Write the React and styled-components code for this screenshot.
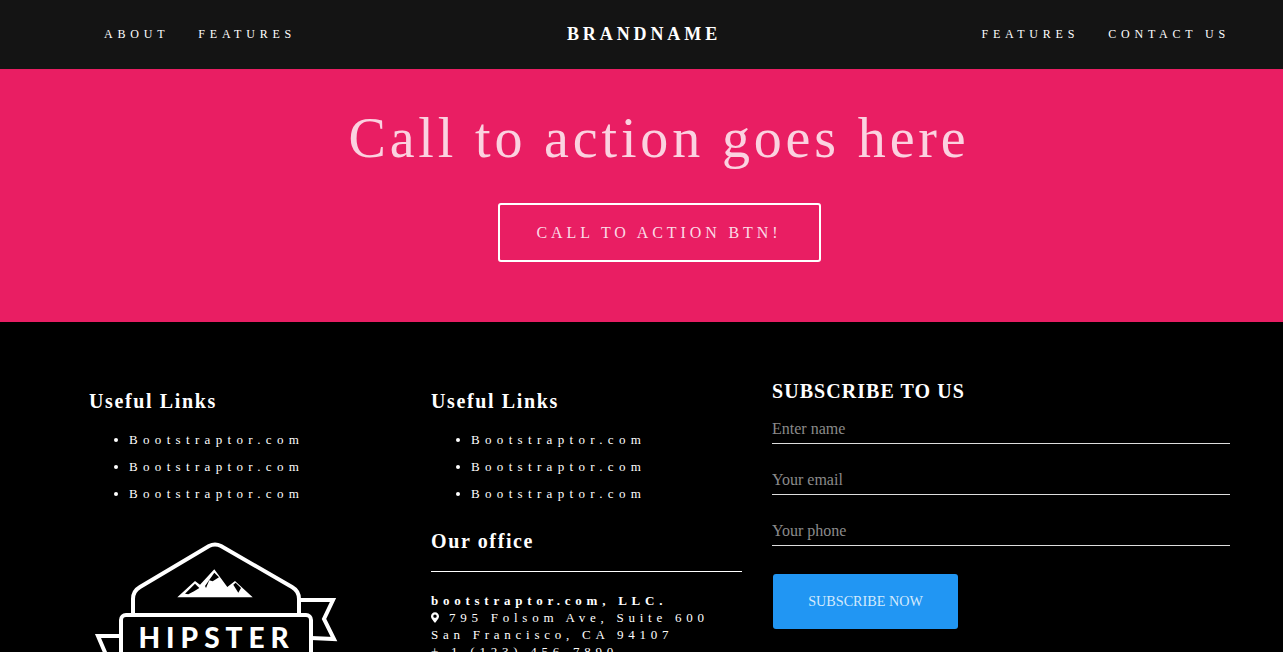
import styled, { createGlobalStyle } from "styled-components";
import { FaMapMarkerAlt } from "react-icons/fa";

const serif = `"Liberation Serif", "DejaVu Serif", serif`;

const GlobalStyle = createGlobalStyle`
  html, body {
    margin: 0;
    padding: 0;
    background: #000;
    font-family: ${serif};
    overflow-x: hidden;
  }
  html::-webkit-scrollbar { display: none; }
  * { box-sizing: border-box; }
`;

const Nav = styled.nav`
  height: 69px;
  background: #141414;
  padding: 0 53px 0 58px;
  display: grid;
  grid-template-columns: 1fr auto 1fr;
  align-items: center;
`;

const NavGroup = styled.div`
  display: flex;
  gap: 29px;
  padding-left: ${({ $end }) => ($end ? 0 : 46)}px;
  justify-content: ${({ $end }) => ($end ? "flex-end" : "flex-start")};
`;

const NavLink = styled.a`
  font-size: 12px;
  letter-spacing: 4.8px;
  color: #fff;
  text-transform: uppercase;
`;

const Brand = styled.a`
  font-size: 18px;
  font-weight: 700;
  letter-spacing: 3.9px;
  color: #fff;
`;

const Cta = styled.section`
  height: 253px;
  background: #e91e63;
  padding-top: 35px;
  padding-left: 35px;
  display: flex;
  flex-direction: column;
  align-items: center;
`;

const CtaTitle = styled.h1`
  margin: 0;
  font-size: 56px;
  line-height: 68px;
  font-weight: 400;
  letter-spacing: 3.85px;
  color: #fbd2e0;
`;

const CtaButton = styled.a`
  margin-top: 31px;
  width: 323px;
  height: 59px;
  padding-top: 1px;
  border: 2px solid #fff;
  border-radius: 3px;
  display: flex;
  align-items: center;
  justify-content: center;
  font-size: 16px;
  letter-spacing: 3.9px;
  color: #fbdbe6;
  text-transform: uppercase;
`;

const Footer = styled.footer`
  background: #000;
  color: #fff;
  padding: 57px 53px 40px 89px;
  display: grid;
  grid-template-columns: 312px 311px 458px;
  column-gap: 30px;
`;

const Column = styled.div`
  display: flex;
  flex-direction: column;
`;

const Heading = styled.h4`
  margin: 0;
  padding-top: ${({ $top }) => $top || 10}px;
  font-size: 20px;
  line-height: 24px;
  font-weight: 700;
  letter-spacing: 1.63px;
  color: #fff;
`;

const LinkList = styled.ul`
  margin: 13px 0 0;
  padding: 0 0 0 40px;
  list-style: disc;
  color: #fff;
`;

const LinkItem = styled.li`
  font-size: 13px;
  line-height: 27px;
  letter-spacing: 5.33px;
  color: #fff;
`;

const Logo = styled.svg`
  display: block;
  margin-top: 34px;
  width: 260px;
  height: 270px;
`;

const Rule = styled.hr`
  margin: 18px 0 20px;
  border: 0;
  border-top: 1px solid #fff;
`;

const Address = styled.address`
  font-style: normal;
  font-size: 13px;
  line-height: 17px;
  letter-spacing: 4.75px;
  color: #fff;
`;

const Company = styled.strong`
  display: block;
  color: #fff;
`;

const Pin = styled(FaMapMarkerAlt)`
  width: 8px;
  height: 11px;
  margin-right: 10px;
  vertical-align: -1px;
  color: #fff;
`;

const SubscribeTitle = styled.h3`
  margin: 0;
  font-size: 20px;
  line-height: 24px;
  font-weight: 700;
  letter-spacing: 1.05px;
  color: #fff;
  text-transform: uppercase;
`;

const Form = styled.form`
  display: flex;
  flex-direction: column;
  gap: 19px;
  margin-top: 9px;
`;

const Input = styled.input`
  height: 32px;
  width: 100%;
  padding: 2px 0 0;
  background: transparent;
  border: 0;
  border-bottom: 1px solid #ddd;
  outline: none;
  font-family: ${serif};
  font-size: 16px;
  color: #fff;
  &::placeholder {
    color: #8a8a8a;
    opacity: 1;
  }
`;

const SubmitButton = styled.button`
  margin: 9px 0 0 1px;
  width: 185px;
  height: 55px;
  border: 0;
  border-radius: 3px;
  background: #2196f3;
  color: #d3eafd;
  font-family: ${serif};
  font-size: 14.2px;
  text-transform: uppercase;
`;

function Links() {
  return (
    <LinkList>
      <LinkItem>Bootstraptor.com</LinkItem>
      <LinkItem>Bootstraptor.com</LinkItem>
      <LinkItem>Bootstraptor.com</LinkItem>
    </LinkList>
  );
}

function HipsterBadge() {
  return (
    <Logo viewBox="0 0 260 270">
      {/* roof */}
      <path
        d="M44 74 V58 Q44 50 51 46 L120 5 Q126 2 132 5 L203 46 Q210 50 210 58 V74"
        fill="none"
        stroke="#fff"
        strokeWidth="4"
      />
      {/* mountains */}
      <path
        d="M88.3 56.3 L106 40 L111 43.7 L125.3 28.3 L138.3 46 L146 40 L163.7 56.3 Z"
        fill="#fff"
      />
      <path d="M96 52.7 L106 42.7 L110.3 47 L105 50.3 L99.3 53.3 Z" fill="#000" />
      <path d="M116 45 L125.3 31.7 L130 36.3 L123.7 40.3 L120.3 39.3 L117 47 Z" fill="#000" />
      <path d="M144.3 43.7 L146.7 41.7 L152 47 L149.3 51.7 Z" fill="#000" />
      {/* ribbons */}
      <path
        d="M210 59 H244 L235 78 L245 98 L222 97"
        fill="none"
        stroke="#fff"
        strokeWidth="4"
      />
      <path
        d="M31 95 H9 L18 116 L9 138 H34"
        fill="none"
        stroke="#fff"
        strokeWidth="4"
      />
      {/* name plate */}
      <rect x="32" y="74" width="190" height="90" rx="5" fill="#000" stroke="#fff" strokeWidth="4" />
      <text
        x="127.6"
        y="107"
        textAnchor="middle"
        fill="#fff"
        fontFamily="Lato, sans-serif"
        fontWeight="900"
        fontSize="28"
        letterSpacing="6"
      >
        HIPSTER
      </text>
    </Logo>
  );
}

export default function App() {
  return (
    <>
      <GlobalStyle />
      <Nav>
        <NavGroup>
          <NavLink>About</NavLink>
          <NavLink>Features</NavLink>
        </NavGroup>
        <Brand>BRANDNAME</Brand>
        <NavGroup $end>
          <NavLink>Features</NavLink>
          <NavLink>Contact us</NavLink>
        </NavGroup>
      </Nav>
      <Cta>
        <CtaTitle>Call to action goes here</CtaTitle>
        <CtaButton>Call to action btn!</CtaButton>
      </Cta>
      <Footer>
        <Column>
          <Heading>Useful Links</Heading>
          <Links />
          <HipsterBadge />
        </Column>
        <Column>
          <Heading>Useful Links</Heading>
          <Links />
          <Heading $top={22}>Our office</Heading>
          <Rule />
          <Address>
            <Company>bootstraptor.com, LLC.</Company>
            <Pin />
            795 Folsom Ave, Suite 600
            <br />
            San Francisco, CA 94107
            <br />
            + 1 (123) 456-7890
          </Address>
        </Column>
        <Column>
          <SubscribeTitle>Subscribe to us</SubscribeTitle>
          <Form>
            <Input placeholder="Enter name" />
            <Input placeholder="Your email" />
            <Input placeholder="Your phone" />
            <SubmitButton type="button">Subscribe now</SubmitButton>
          </Form>
        </Column>
      </Footer>
    </>
  );
}
